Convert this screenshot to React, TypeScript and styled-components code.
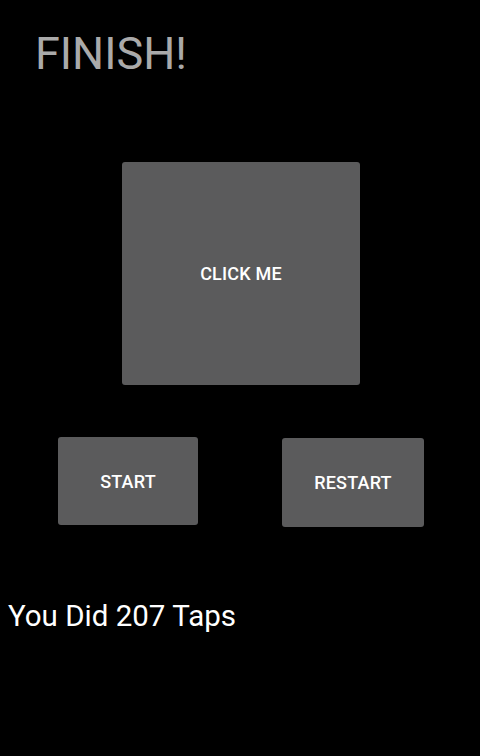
import styled, { createGlobalStyle } from "styled-components";

const GlobalStyle = createGlobalStyle`
  html, body {
    margin: 0;
    padding: 0;
    background: #000000;
  }
  body {
    font-family: Roboto, "Noto Sans", sans-serif;
  }
`;

const Screen = styled.div`
  width: 480px;
  height: 756px;
  background: #000000;
  display: flex;
  flex-direction: column;
  overflow: hidden;
`;

const Title = styled.h1`
  margin: 31px 0 0 35px;
  font-size: 45px;
  line-height: 45px;
  font-weight: 400;
  color: #aaaaaa;
`;

const TapButton = styled.button<{ $width: number; $height: number; $top?: number }>`
  width: ${(p) => p.$width}px;
  height: ${(p) => p.$height}px;
  margin-top: ${(p) => p.$top ?? 0}px;
  background: #5b5b5c;
  border: none;
  border-radius: 3px;
  color: #ffffff;
  font-family: Roboto, sans-serif;
  font-weight: 500;
  font-size: 18px;
  letter-spacing: 0.2px;
  text-transform: uppercase;
  display: flex;
  align-items: center;
  justify-content: center;
  padding: 0;
  flex-shrink: 0;
`;

const Center = styled.div`
  display: flex;
  justify-content: center;
  margin-top: 86px;
  padding-left: 2px;
`;

const ButtonRow = styled.div`
  display: flex;
  align-items: flex-start;
  gap: 84px;
  margin-top: 52px;
  padding-left: 58px;
`;

const Result = styled.p`
  margin: 74px 0 0 8px;
  font-size: 29.5px;
  line-height: 30px;
  color: #ffffff;
`;

export default function App() {
  const taps = 207;
  return (
    <Screen>
      <GlobalStyle />
      <Title>FINISH!</Title>
      <Center>
        <TapButton $width={238} $height={223}>Click Me</TapButton>
      </Center>
      <ButtonRow>
        <TapButton $width={140} $height={88}>Start</TapButton>
        <TapButton $width={142} $height={89} $top={1}>Restart</TapButton>
      </ButtonRow>
      <Result>You Did {taps} Taps</Result>
    </Screen>
  );
}
